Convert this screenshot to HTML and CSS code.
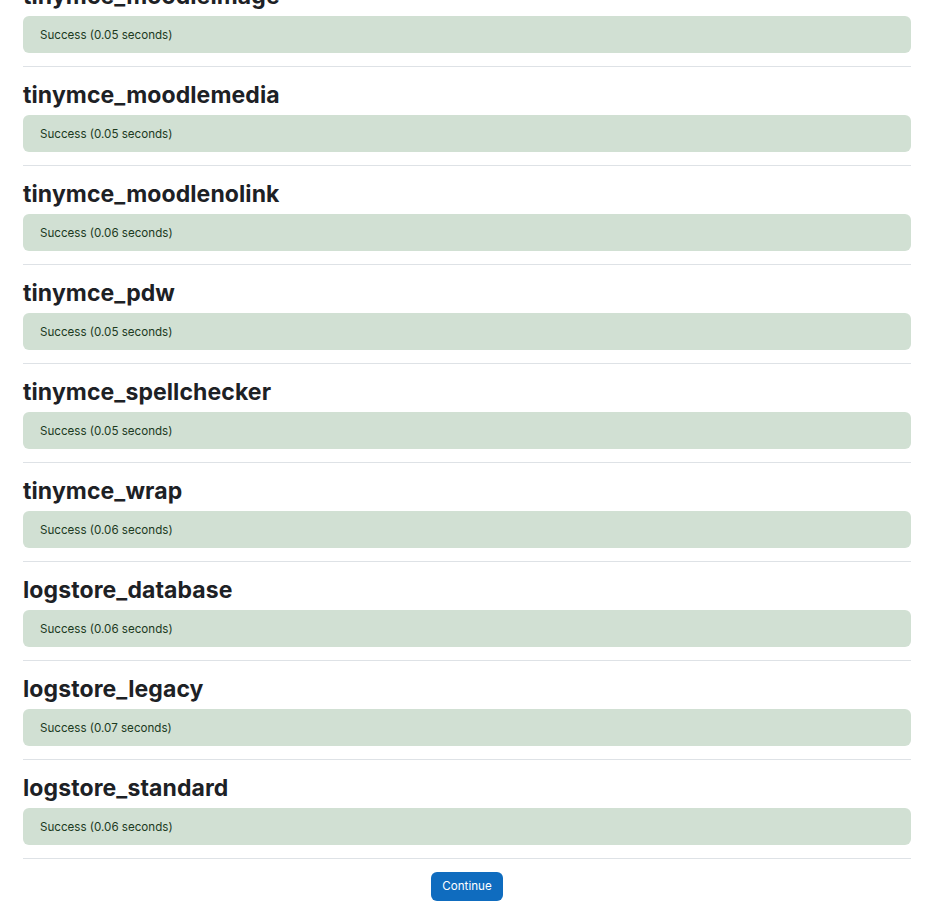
FILE: index.html
```html
<!DOCTYPE html>
<html lang="en">
<head>
    <meta charset="UTF-8">
    <title>Upgrading plugins</title>
    <link rel="stylesheet" href="styles.css">
</head>
<body>
    <div class="page">
        <div class="plugin">
            <h3>tinymce_moodleimage</h3>
            <div class="alert-success">Success (0.05 seconds)</div>
        </div>
        <div class="plugin">
            <h3>tinymce_moodlemedia</h3>
            <div class="alert-success">Success (0.05 seconds)</div>
        </div>
        <div class="plugin">
            <h3>tinymce_moodlenolink</h3>
            <div class="alert-success">Success (0.06 seconds)</div>
        </div>
        <div class="plugin">
            <h3>tinymce_pdw</h3>
            <div class="alert-success">Success (0.05 seconds)</div>
        </div>
        <div class="plugin">
            <h3>tinymce_spellchecker</h3>
            <div class="alert-success">Success (0.05 seconds)</div>
        </div>
        <div class="plugin">
            <h3>tinymce_wrap</h3>
            <div class="alert-success">Success (0.06 seconds)</div>
        </div>
        <div class="plugin">
            <h3>logstore_database</h3>
            <div class="alert-success">Success (0.06 seconds)</div>
        </div>
        <div class="plugin">
            <h3>logstore_legacy</h3>
            <div class="alert-success">Success (0.07 seconds)</div>
        </div>
        <div class="plugin">
            <h3>logstore_standard</h3>
            <div class="alert-success">Success (0.06 seconds)</div>
        </div>

        <div class="buttons">
            <button type="button">Continue</button>
        </div>
    </div>
</body>
</html>
```

FILE: styles.css
```css
:root {
    --text-color: #1d2125;
    --border-color: #dee2e6;
    --success-bg: #d1e0d3;
    --success-text: #1c3a1e;
    --primary-color: #0f6cbf;
}

* {
    margin: 0;
    padding: 0;
    box-sizing: border-box;
}

body {
    font-family: Inter, 'Liberation Sans', sans-serif;
    color: var(--text-color);
    background-color: white;
}

.page {
    width: 888px;
    margin: -18px 0 0 23px;
}

.plugin {
    border-bottom: 1px solid var(--border-color);
    padding-bottom: 13px;
    margin-bottom: 14px;
}

h3 {
    font-size: 23px;
    font-weight: 700;
    line-height: 27px;
    padding-top: 1px;
    margin-bottom: 6px;
    letter-spacing: 0.1px;
}

.alert-success {
    background-color: var(--success-bg);
    color: var(--success-text);
    border-radius: 6px;
    padding: 10px 17px 8px;
    font-size: 11.6px;
    line-height: 19px;
}

.buttons {
    display: flex;
    justify-content: center;
}

button {
    background-color: var(--primary-color);
    color: white;
    border: none;
    border-radius: 6px;
    font-family: inherit;
    font-size: 11.6px;
    line-height: 16px;
    padding: 6px 11px 7px;
    margin-top: -1px;
    cursor: pointer;
}
```
